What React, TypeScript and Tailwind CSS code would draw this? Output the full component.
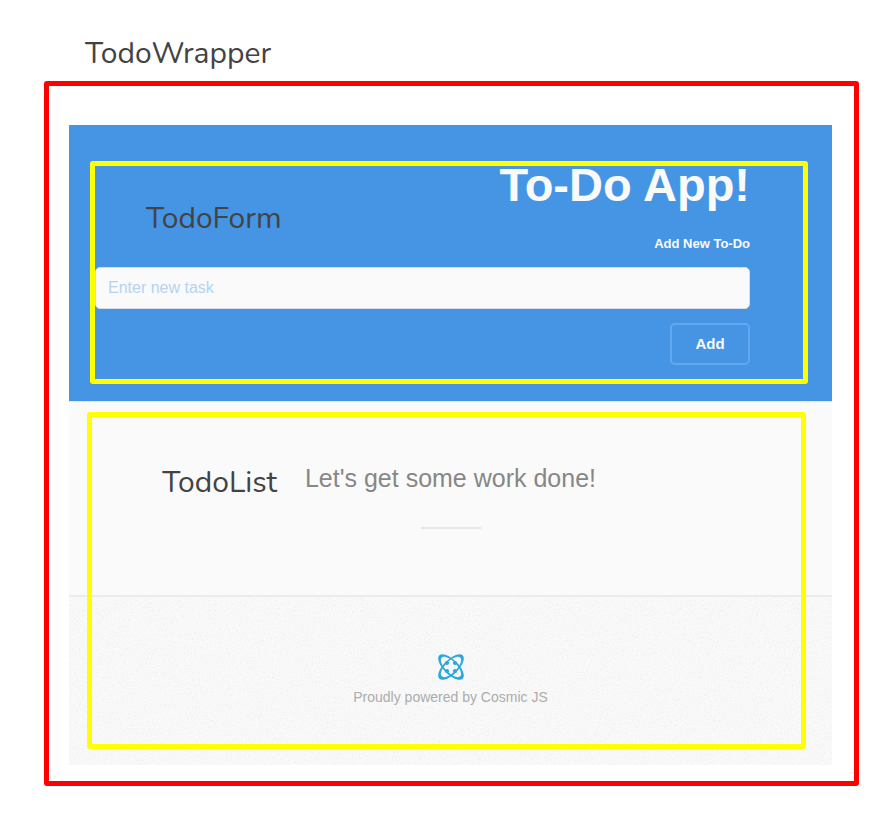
import React from "react";

const labelClass =
  "font-['Nunito',Lato,sans-serif] text-[30px] leading-[42px] text-[#434343]";

const orbit =
  "M14 -2.500C18.200 -2.500 21.300 5 21.300 14S18.200 30.500 14 30.500S6.700 23 6.700 14S9.800 -2.500 14 -2.500ZM14 0.800C11 0.800 8.300 6.700 8.300 14S11 27.200 14 27.200S19.700 21.300 19.700 14S17 0.800 14 0.800Z";

function CosmicLogo() {
  return (
    <svg
      className="h-7 w-7"
      viewBox="0 0 28 28"
      fill="#29a8e0"
      role="img"
      aria-label="Cosmic JS"
    >
      <path fillRule="evenodd" transform="rotate(45 14 14)" d={orbit} />
      <path fillRule="evenodd" transform="rotate(-45 14 14)" d={orbit} />
      <circle cx="10" cy="10" r="2.100" />
      <circle cx="18" cy="10" r="2.100" />
      <circle cx="10" cy="18" r="2.100" />
      <circle cx="18" cy="18" r="2.100" />
    </svg>
  );
}

function PaperTexture() {
  return (
    <svg className="absolute inset-0 h-full w-full opacity-5" aria-hidden="true">
      <filter id="paper">
        <feTurbulence type="fractalNoise" baseFrequency="0.6" numOctaves="2" />
        <feColorMatrix
          type="matrix"
          values="2 0 0 0 -0.3  2 0 0 0 -0.3  2 0 0 0 -0.3  0 0 0 0 1"
        />
      </filter>
      <rect width="100%" height="100%" filter="url(#paper)" />
    </svg>
  );
}

function TodoForm() {
  return (
    <header className="bg-[#4695e5] pt-9 pr-6 pb-[17px] pl-[21px]">
      <form
        className="flex h-[223px] flex-col rounded-[3px] border-5 border-[#ffff00] pr-[53px]"
        onSubmit={(e) => e.preventDefault()}
      >
        <div className="flex items-start justify-between">
          <span className={`${labelClass} mt-8 ml-[51px]`}>TodoForm</span>
          <div className="flex flex-col items-end text-[#fafafa]">
            <h1 className="text-[47px] leading-[38px] font-bold">To-Do App!</h1>
            <label
              htmlFor="task"
              className="mt-[30px] text-[13px] leading-5 font-bold"
            >
              Add New To-Do
            </label>
          </div>
        </div>
        <input
          id="task"
          type="text"
          placeholder="Enter new task"
          className="mt-[13px] h-[42px] w-full rounded-[5px] border border-[#d5dbe8] bg-[#fafafa] px-3 text-[16px] text-[#333333] placeholder:text-[#b5d3f1]"
        />
        <button
          type="submit"
          className="mt-[14px] h-[42px] w-20 self-end rounded-[5px] border-2 border-[#62a8f0] text-[15px] font-bold text-[#fafafa]"
        >
          Add
        </button>
      </form>
    </header>
  );
}

function TodoList() {
  return (
    <div className="relative">
      <section className="h-[194px] border-t border-[#d9eaf8] bg-[#fafafa] pt-[60px]">
        <div className="grid grid-cols-[1fr_auto_1fr] gap-7">
          <span className={`${labelClass} justify-self-end`}>TodoList</span>
          <h2 className="text-[25px] leading-8 text-[#878787]">
            Let's get some work done!
          </h2>
        </div>
        <hr className="mx-auto mt-[23px] w-[60px] border-t-2 border-[#e7e7e7]" />
      </section>
      <footer className="relative flex h-[170px] flex-col items-center border-t-2 border-[#ebebeb] bg-[#fafafa] pt-14">
        <PaperTexture />
        <div className="relative flex flex-col items-center">
          <CosmicLogo />
          <p className="mt-[6px] text-[14px] leading-5 text-[#acacac]">
            Proudly powered by Cosmic JS
          </p>
        </div>
      </footer>
      <div className="pointer-events-none absolute top-[11px] right-[26px] bottom-4 left-[18px] rounded-[3px] border-5 border-[#ffff00]" />
    </div>
  );
}

export default function App() {
  return (
    <div className="min-h-screen bg-white pt-[33px] pr-[14px] pb-9 pl-11 font-['Liberation_Sans',Arial,sans-serif]">
      <p className={`${labelClass} mb-[6px] ml-[41px]`}>TodoWrapper</p>
      <main className="rounded-[3px] border-5 border-[#ff0000] pt-[39px] pr-[22px] pb-4 pl-5">
        <TodoForm />
        <TodoList />
      </main>
    </div>
  );
}
